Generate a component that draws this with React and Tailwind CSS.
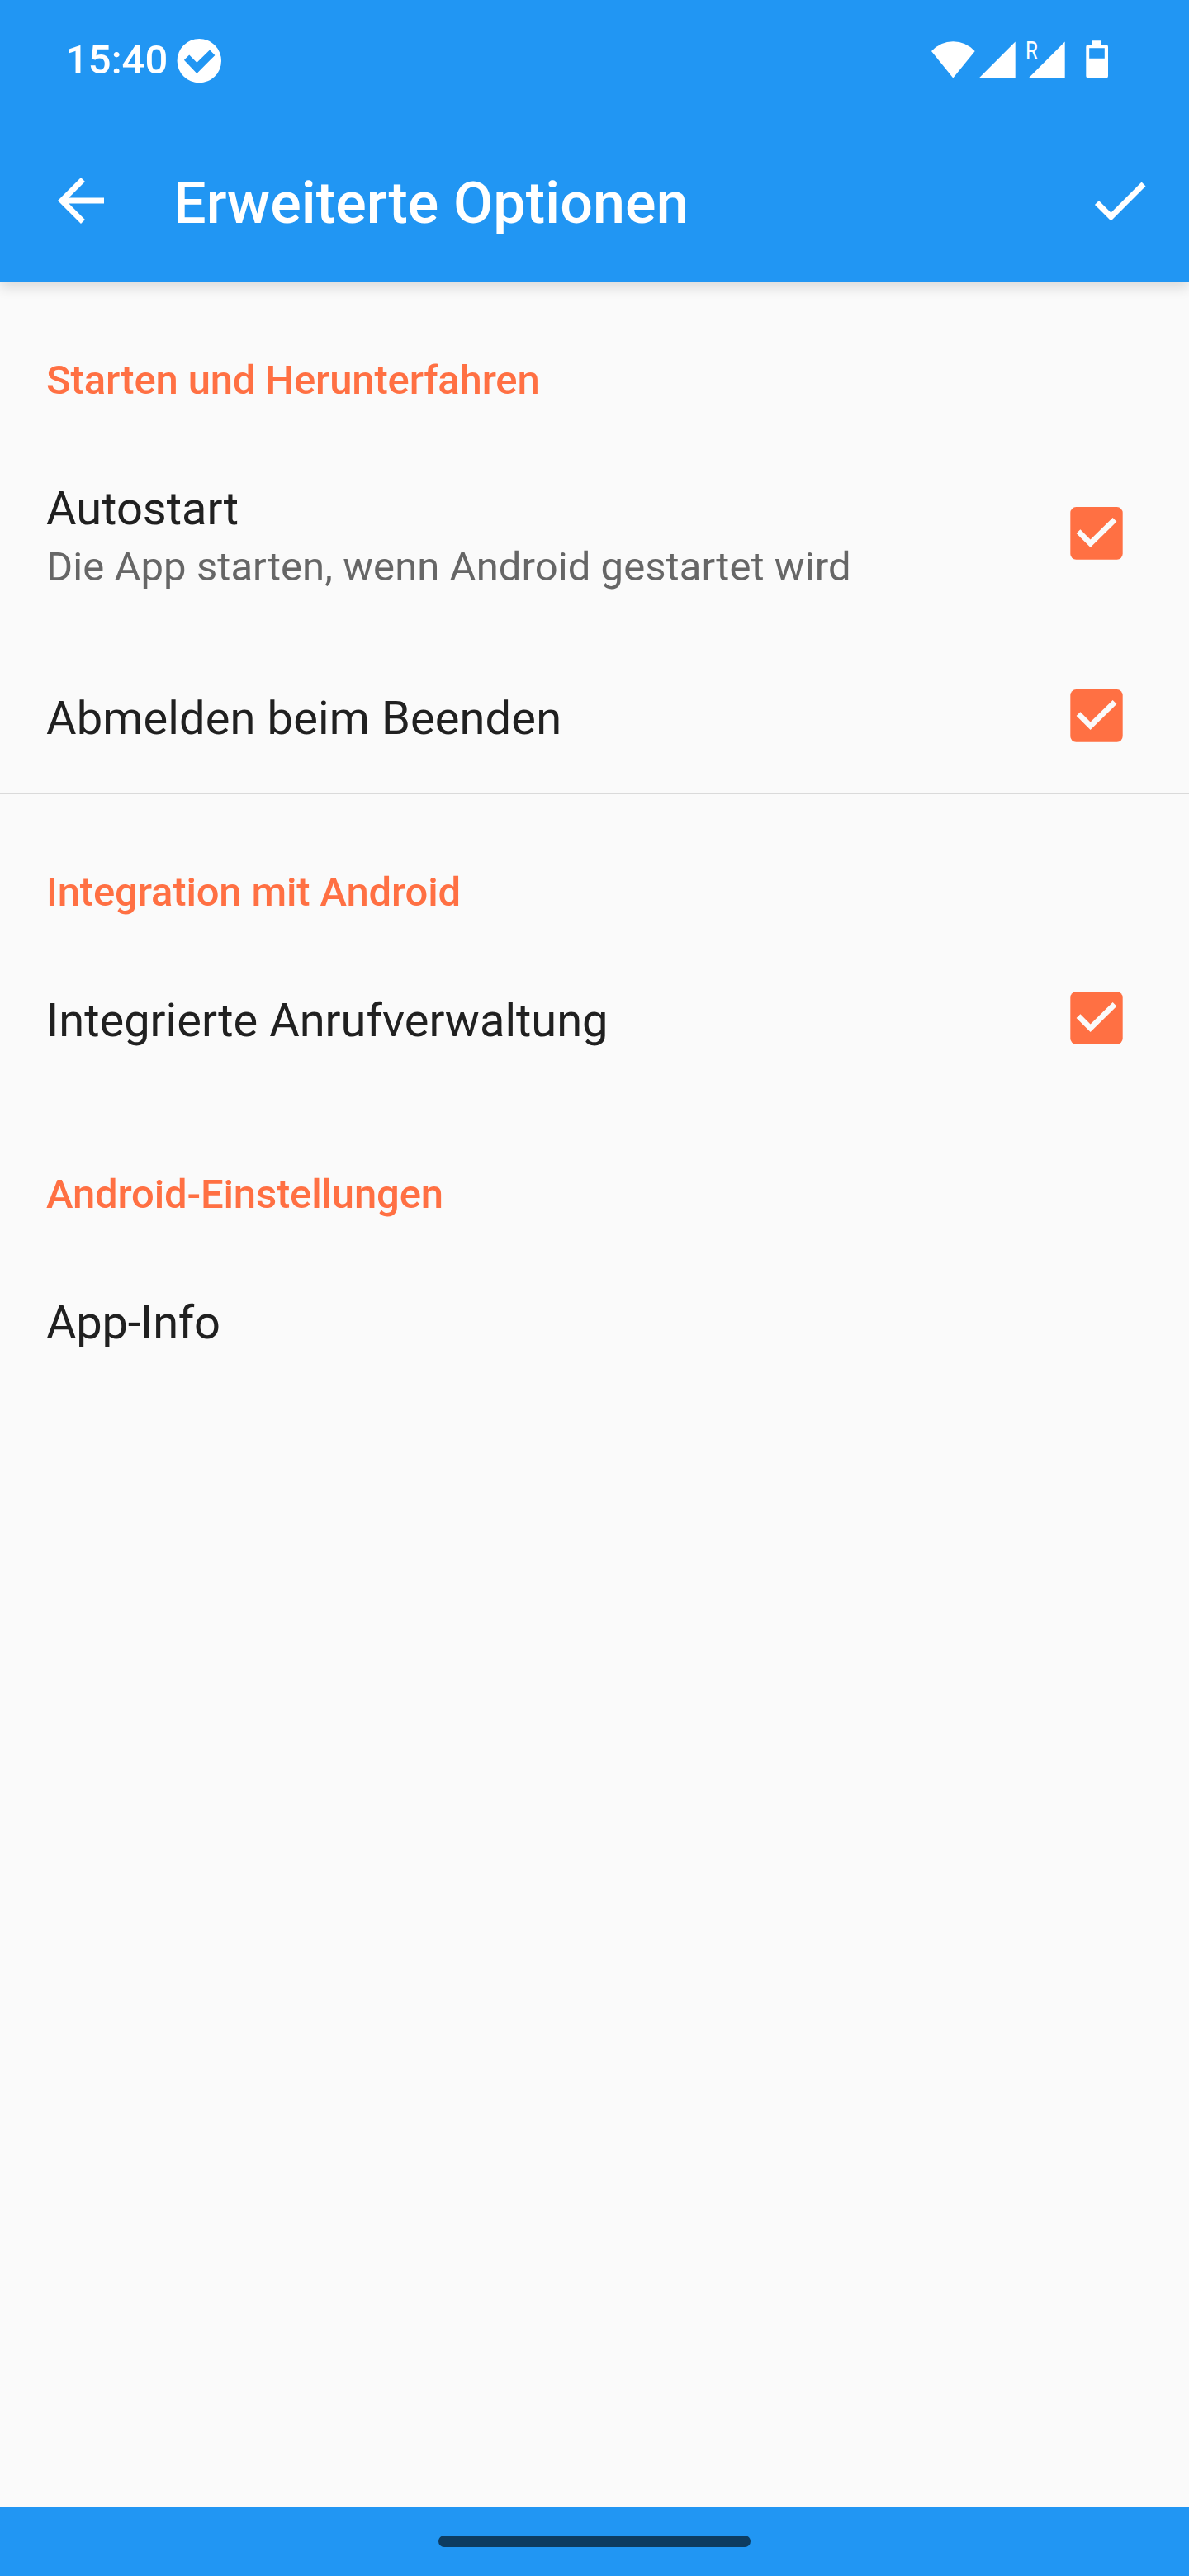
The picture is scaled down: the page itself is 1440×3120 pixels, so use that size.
import clsx from 'clsx';
import { MdArrowBack, MdCheck } from 'react-icons/md';

const sections = [
  {
    title: 'Starten und Herunterfahren',
    items: [
      { label: 'Autostart', hint: 'Die App starten, wenn Android gestartet wird', checked: true },
      { label: 'Abmelden beim Beenden', checked: true, tracking: 'tracking-[0.12px]' },
    ],
  },
  {
    title: 'Integration mit Android',
    items: [{ label: 'Integrierte Anrufverwaltung', checked: true }],
  },
  {
    title: 'Android-Einstellungen',
    items: [{ label: 'App-Info', tracking: 'tracking-[-0.2px]' }],
  },
];

function StatusBar() {
  return (
    <div className="flex h-[144px] items-center justify-between pl-[79px] pr-[96px]">
      <div className="flex items-center">
        <span className="w-[135px] pt-px text-[49px] font-medium leading-none">15:40</span>
        <svg className="mt-[3px] size-[54px]" viewBox="0 0 54 54">
          <circle cx="27.3" cy="26.7" r="26.7" fill="#fff" />
          <path d="M8.9 25.7l6.3-6.2 9.2 9.2L40 13.5l6.4 6.4L24.4 42z" fill="#2196f3" />
        </svg>
      </div>
      {/* wifi, two SIM signals (second one roaming), battery */}
      <svg className="h-[68px] w-[218px]" viewBox="0 -10 218 68" fill="#fff">
        <path d="M2 14Q13 2.3 28.3 2.3T54.7 14L28.3 46.5z" />
        <path d="M103.7 2.5v44.2H59.5z" />
        <path d="M163.7 2.5v44.2h-44.2z" />
        <text transform="translate(115.9 23.8) scale(.76 1)" fontSize="32" fontFamily="Roboto, sans-serif">R</text>
        <path fillRule="evenodd" d="M196.7 1.3h11.3V6h5a3 3 0 0 1 3 3v34.7a3 3 0 0 1-3 3h-20.7a3 3 0 0 1-3-3V9a3 3 0 0 1 3-3h4.4zM193.2 10.2v12.6h18.6V10.2z" />
      </svg>
    </div>
  );
}

function Toolbar() {
  return (
    <div className="flex h-[197px] items-center pl-14 pr-[42px]">
      <MdArrowBack className="size-[84px]" />
      <h1 className="ml-[70px] flex-1 pt-[7px] text-[70px] font-medium leading-none tracking-[0.12px]">
        Erweiterte Optionen
      </h1>
      <MdCheck className="size-[84px]" />
    </div>
  );
}

function Checkbox() {
  return (
    <svg className="size-[64px]" viewBox="0 0 64 64">
      <rect x="0.3" y="0.1" width="63.4" height="63.6" rx="7" fill="#ff7043" />
      <path d="M7.6 32l4.8-4.8 12.2 12.2L51.6 13l4.8 4.8L24.6 49z" fill="#fafafa" />
    </svg>
  );
}

function Option({ item }) {
  return (
    <div className={clsx('flex items-center justify-between pr-20', item.hint ? 'h-[254px]' : 'h-[188px]')}>
      <div className="pt-[6px]">
        <div className={clsx('text-[56px] leading-[75px] text-[#202020]', item.tracking)}>{item.label}</div>
        {item.hint && (
          <div className="text-[49px] leading-[66px] tracking-[0.07px] text-[#666666]">{item.hint}</div>
        )}
      </div>
      {item.checked && <Checkbox />}
    </div>
  );
}

export default function App() {
  return (
    <div className="flex h-[3120px] w-[1440px] flex-col bg-[#fafafa] font-['Roboto',sans-serif]">
      <header className="bg-[#2196f3] text-white shadow-[0_8px_14px_rgba(0,0,0,0.12)]">
        <StatusBar />
        <Toolbar />
      </header>
      <main className="flex-1">
        {sections.map((section) => (
          <section key={section.title} className="border-t border-[#dadada] pl-14 first:border-transparent">
            <h2 className="pb-[25px] pt-[86px] text-[49px] font-medium leading-[66px] tracking-[-0.16px] text-[#ff7043]">
              {section.title}
            </h2>
            {section.items.map((item) => (
              <Option key={item.label} item={item} />
            ))}
          </section>
        ))}
      </main>
      <footer className="flex h-[84px] items-center justify-center bg-[#2196f3]">
        <div className="h-[14px] w-[378px] rounded-full bg-[#0d3c61]" />
      </footer>
    </div>
  );
}
